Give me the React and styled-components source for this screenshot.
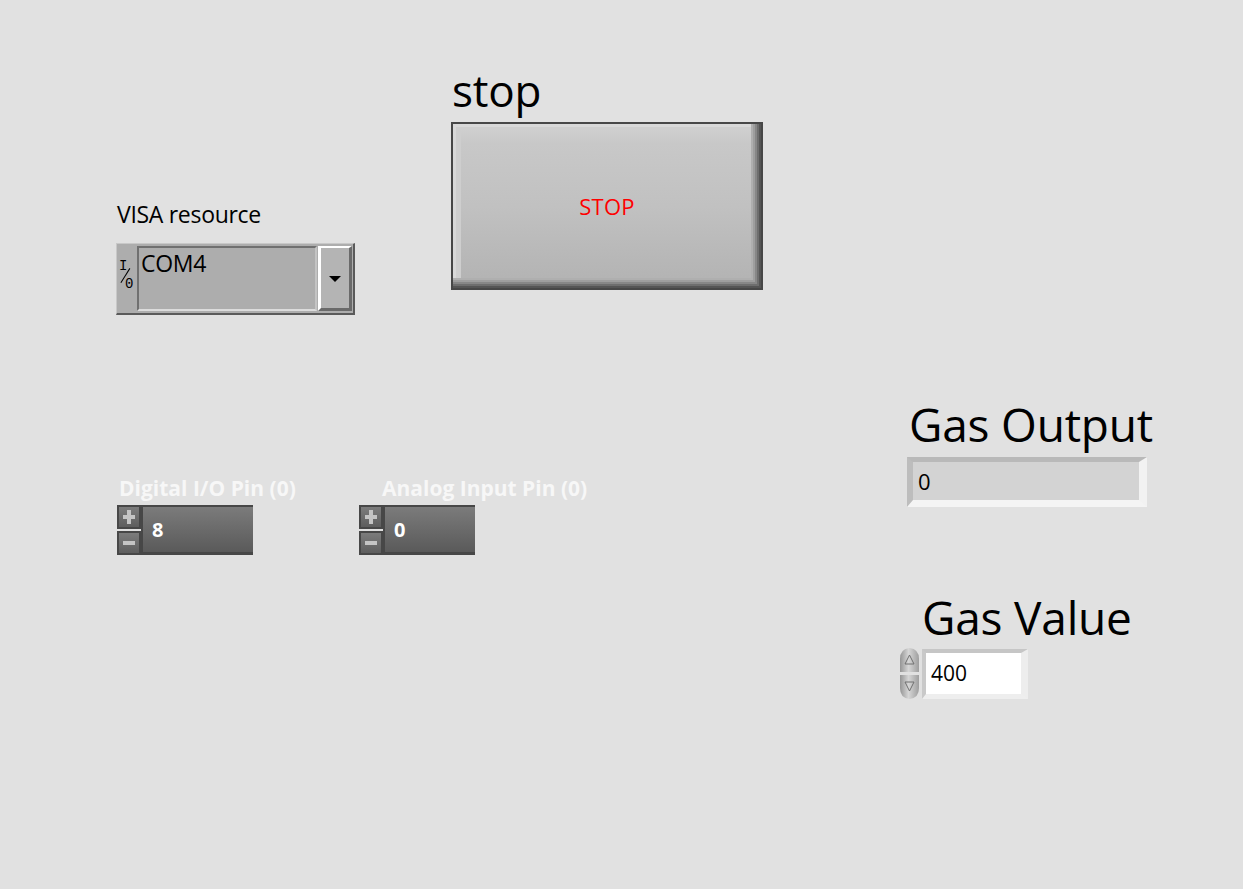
import React from 'react';
import styled, { createGlobalStyle } from 'styled-components';

const GlobalStyle = createGlobalStyle`
  html, body {
    margin: 0;
    padding: 0;
    background: #e1e1e1;
  }
  body {
    font-family: "Open Sans", "Noto Sans", "Liberation Sans", sans-serif;
    color: #000;
  }
`;

const Panel = styled.main`
  display: flex;
  align-items: flex-start;
  min-height: 889px;
  padding-left: 116px;
  box-sizing: border-box;
  overflow: hidden;
`;

const LeftColumn = styled.div`
  width: 335px;
  flex: none;
  display: flex;
  flex-direction: column;
  padding-top: 200px;
`;

const MiddleColumn = styled.div`
  width: 446px;
  flex: none;
  display: flex;
  flex-direction: column;
  padding-top: 63px;
`;

const RightColumn = styled.div`
  display: flex;
  flex-direction: column;
  padding-top: 396px;
`;

/* ---------- labels ---------- */

const SmallLabel = styled.div`
  font-size: 23px;
  line-height: 28px;
  margin-left: 1px;
  letter-spacing: -0.3px;
`;

const BigLabel = styled.div`
  font-size: ${(p) => p.size}px;
  line-height: ${(p) => p.size + 10}px;
  margin-left: ${(p) => p.offset || 0}px;
  letter-spacing: -0.2px;
  white-space: nowrap;
`;

const PinLabel = styled.div`
  font-size: 21px;
  font-weight: 700;
  line-height: 26px;
  color: #f7f7f7;
  margin-left: ${(p) => p.offset}px;
  white-space: nowrap;
`;

/* ---------- VISA resource ---------- */

const VisaBox = styled.div`
  margin-top: 15px;
  width: 239px;
  height: 72px;
  box-sizing: border-box;
  display: flex;
  align-items: stretch;
  background: #adadad;
  border-top: 1px solid #c8c8c8;
  border-left: 1px solid #c8c8c8;
  border-right: 2px solid #5a5a5a;
  border-bottom: 2px solid #5a5a5a;
  padding: 2px 1px 2px 0;
`;

const IoGlyph = styled.div`
  position: relative;
  width: 20px;
  flex: none;
  font-family: "Liberation Mono", "DejaVu Sans Mono", monospace;
  font-size: 14px;
  line-height: 14px;
  color: #000;
  &::after {
    content: '';
    position: absolute;
    left: 0px;
    top: 29px;
    width: 17px;
    height: 1.3px;
    background: #000;
    transform: rotate(-58deg);
  }
`;

const IoChar = styled.span`
  position: absolute;
  left: ${(p) => p.x}px;
  top: ${(p) => p.y}px;
`;

const VisaField = styled.div`
  flex: 1;
  box-sizing: border-box;
  border-top: 2px solid #707070;
  border-left: 2px solid #707070;
  border-bottom: 2px solid #dcdcdc;
  border-right: 2px solid #c4c4c4;
  background: #adadad;
  font-size: 23px;
  line-height: 28px;
  letter-spacing: -0.3px;
  padding: 1px 0 0 2px;
`;

const DropButton = styled.div`
  width: 34px;
  flex: none;
  box-sizing: border-box;
  margin-left: 1px;
  background: #b4b4b4;
  border-top: 2px solid #ffffff;
  border-left: 3px solid #ffffff;
  border-right: 3px solid #6a6a6a;
  border-bottom: 3px solid #6a6a6a;
  display: flex;
  align-items: center;
  justify-content: center;
  &::after {
    content: '';
    border-left: 6px solid transparent;
    border-right: 6px solid transparent;
    border-top: 6px solid #000;
    margin-top: 2px;
  }
`;

/* ---------- numeric pin controls ---------- */

const PinRow = styled.div`
  margin-top: 160px;
  margin-left: 1px;
  display: flex;
`;

const PinBlock = styled.div`
  width: ${(p) => p.width}px;
  flex: none;
  display: flex;
  flex-direction: column;
  gap: 4px;
`;

const Numeric = styled.div`
  display: flex;
  height: 50px;
`;

const StepColumn = styled.div`
  display: flex;
  flex-direction: column;
  gap: 2px;
  width: 24px;
`;

const StepButton = styled.div`
  position: relative;
  flex: 1;
  box-sizing: border-box;
  border: 2px solid #474747;
  background: linear-gradient(#7c7c7c, #5e5e5e);
  &::before,
  &::after {
    content: '';
    position: absolute;
    background: #c4c4c4;
    left: 4px;
    right: 4px;
    top: 50%;
    height: 4px;
    margin-top: -2px;
  }
  &::after {
    display: ${(p) => (p.plus ? 'block' : 'none')};
    left: 50%;
    right: auto;
    width: 4px;
    margin-left: -2px;
    top: 3px;
    bottom: 3px;
    height: auto;
    margin-top: 0;
  }
`;

const NumericDisplay = styled.div`
  width: ${(p) => p.width}px;
  box-sizing: border-box;
  border-top: 2px solid #474747;
  border-bottom: 3px solid #474747;
  border-left: 2px solid #474747;
  background: linear-gradient(#7b7b7b, #5a5a5a);
  color: #ffffff;
  font-size: 20px;
  font-weight: 700;
  display: flex;
  align-items: center;
  padding-left: 9px;
`;

/* ---------- stop button ---------- */

const StopButton = styled.button`
  margin-top: 5px;
  width: 312px;
  height: 168px;
  box-sizing: border-box;
  border: 2px solid #474747;
  padding: 0;
  font-family: inherit;
  font-size: 22px;
  letter-spacing: 0.3px;
  color: #ff0000;
  background: linear-gradient(#d2d2d2 0%, #c8c8c8 12%, #c1c1c1 50%, #b2b2b2 100%);
  box-shadow:
    inset -2px -2px 0 #555555,
    inset -4px -4px 0 #6e6e6e,
    inset -6px -6px 0 #878787,
    inset -8px -8px 0 #9e9e9e,
    inset -10px -10px 0 #afafaf,
    inset 3px 3px 0 #d8d8d8,
    inset 8px 6px 0 #cecece;
  display: flex;
  align-items: center;
  justify-content: center;
  cursor: pointer;
`;

/* ---------- gas output / value ---------- */

const Indicator = styled.div`
  margin-left: 10px;
  margin-top: 5px;
  width: 240px;
  height: 50px;
  box-sizing: border-box;
  background: #d3d3d3;
  border-top: 5px solid #b9b9b9;
  border-left: 6px solid #bdbdbd;
  border-right: 8px solid #f2f2f2;
  border-bottom: 7px solid #f4f4f4;
  font-size: 22px;
  display: flex;
  align-items: center;
  padding-left: 5px;
`;

const GasValueBlock = styled.div`
  margin-top: 82px;
  display: flex;
  flex-direction: column;
`;

const ValueRow = styled.div`
  display: flex;
  align-items: center;
  margin-top: 2px;
`;

const Spinner = styled.svg`
  flex: none;
  display: block;
`;

const ValueBox = styled.div`
  width: 106px;
  height: 50px;
  box-sizing: border-box;
  background: #ffffff;
  border-top: 4px solid #c6c6c6;
  border-left: 4px solid #c9c9c9;
  border-right: 7px solid #ededed;
  border-bottom: 5px solid #eeeeee;
  font-size: 21px;
  display: flex;
  align-items: center;
  padding-left: 5px;
`;

const Pin = ({ label, value, offset, blockWidth, width }) => (
  <PinBlock width={blockWidth}>
    <PinLabel offset={offset}>{label}</PinLabel>
    <Numeric>
      <StepColumn>
        <StepButton plus />
        <StepButton />
      </StepColumn>
      <NumericDisplay width={width}>{value}</NumericDisplay>
    </Numeric>
  </PinBlock>
);

const App = () => {
  return (
    <>
      <GlobalStyle />
      <Panel>
        <LeftColumn>
          <SmallLabel>VISA resource</SmallLabel>
          <VisaBox>
            <IoGlyph>
              <IoChar x={2} y={13}>I</IoChar>
              <IoChar x={8} y={31}>0</IoChar>
            </IoGlyph>
            <VisaField>COM4</VisaField>
            <DropButton />
          </VisaBox>
          <PinRow>
            <Pin label="Digital I/O Pin (0)" value="8" offset={2} blockWidth={242} width={112} />
            <Pin label="Analog Input Pin (0)" value="0" offset={23} blockWidth={220} width={92} />
          </PinRow>
        </LeftColumn>

        <MiddleColumn>
          <BigLabel size={44} offset={1}>stop</BigLabel>
          <StopButton>STOP</StopButton>
        </MiddleColumn>

        <RightColumn>
          <BigLabel size={46} offset={12}>Gas Output</BigLabel>
          <Indicator>0</Indicator>
          <GasValueBlock>
            <BigLabel size={46} offset={25}>Gas Value</BigLabel>
            <ValueRow>
              <Spinner width="25" height="53" viewBox="0 0 25 53">
                <defs>
                  <linearGradient id="spin" x1="0" x2="1" y1="0" y2="0">
                    <stop offset="0" stopColor="#959595" />
                    <stop offset="0.45" stopColor="#d6d6d6" />
                    <stop offset="1" stopColor="#9e9e9e" />
                  </linearGradient>
                </defs>
                <path d="M3 12 Q3 2 12.5 1 Q22 2 22 12 L22 25 L3 25 Z" fill="url(#spin)" />
                <path d="M3 28 L22 28 L22 41 Q22 51 12.5 52 Q3 51 3 41 Z" fill="url(#spin)" />
                <path d="M12.5 8 L17 17 L8 17 Z" fill="none" stroke="#707070" strokeWidth="1" />
                <path d="M8 35 L17 35 L12.5 44 Z" fill="none" stroke="#707070" strokeWidth="1" />
              </Spinner>
              <ValueBox>400</ValueBox>
            </ValueRow>
          </GasValueBlock>
        </RightColumn>
      </Panel>
    </>
  );
};

export default App;
